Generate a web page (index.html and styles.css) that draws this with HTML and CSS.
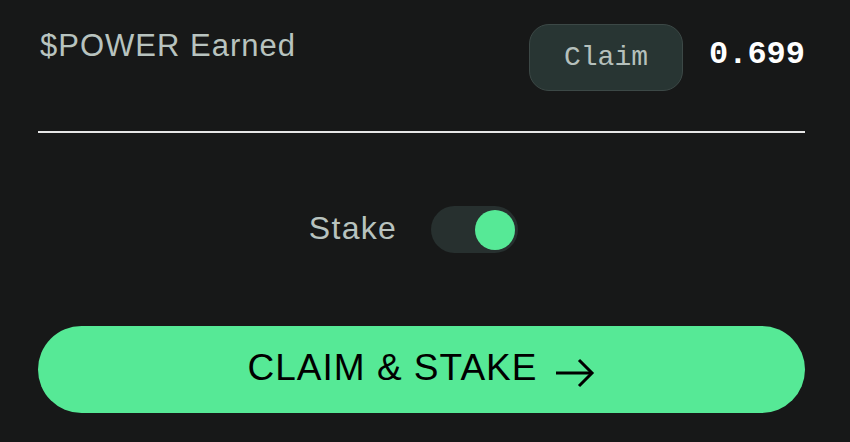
FILE: index.html
```html
<!DOCTYPE html>
<html>
<head>
<meta charset="utf-8">
<link rel="stylesheet" href="styles.css">
</head>
<body>
<div class="panel">
  <div class="header">
    <div class="title">$POWER Earned</div>
    <div class="right">
      <button class="claim">Claim</button>
      <div class="amount">0.699</div>
    </div>
  </div>
  <div class="divider"></div>
  <div class="stake-row">
    <span class="stake-label">Stake</span>
    <div class="toggle"><div class="knob"></div></div>
  </div>
  <button class="cta">
    <span>CLAIM &amp; STAKE</span>
    <svg class="arrow" width="40" height="30" viewBox="0 0 40 30" fill="none" stroke="#000" stroke-width="3" stroke-linecap="butt" stroke-linejoin="miter">
      <path d="M1 15 H37"/>
      <path d="M24 2 L37 15 L24 28"/>
    </svg>
  </button>
</div>
</body>
</html>
```
FILE: styles.css
```css
* { box-sizing: border-box; }
html, body {
  margin: 0;
  padding: 0;
  background: #171818;
  width: 850px;
  height: 442px;
  overflow: hidden;
}
.panel {
  padding: 24px 45px 0 38px;
  font-family: "Liberation Sans", Arial, sans-serif;
}
.header {
  display: flex;
  justify-content: space-between;
  align-items: flex-start;
  height: 107px;
}
.title {
  color: #b8c3bf;
  font-size: 31px;
  line-height: 36px;
  letter-spacing: 1px;
  margin-top: 4px;
  padding-left: 2px;
}
.right {
  display: flex;
  align-items: center;
  gap: 26px;
}
.claim {
  width: 154px;
  height: 67px;
  border-radius: 20px;
  background: #283533;
  border: 1.5px solid #3c4846;
  color: #b5c0bc;
  font-family: "Liberation Mono", "DejaVu Sans Mono", monospace;
  font-size: 28px;
  padding: 0;
}
.amount {
  color: #ffffff;
  font-family: "Liberation Mono", "DejaVu Sans Mono", monospace;
  font-weight: bold;
  font-size: 32px;
  line-height: 36px;
  margin-top: -6px;
}
.divider {
  height: 2px;
  background: #e6e6e6;
}
.stake-row {
  display: flex;
  justify-content: center;
  align-items: center;
  gap: 34px;
  margin-top: 73px;
  padding-right: 16px;
}
.stake-label {
  color: #b8c3bf;
  font-size: 32px;
  line-height: 36px;
  letter-spacing: 1.3px;
  margin-top: -3px;
}
.toggle {
  width: 87px;
  height: 47px;
  border-radius: 24px;
  background: #27302f;
  display: flex;
  align-items: center;
  justify-content: flex-end;
  padding-right: 3px;
}
.knob {
  width: 40px;
  height: 40px;
  border-radius: 50%;
  background: #56e996;
}
.cta {
  margin-top: 73px;
  width: 100%;
  height: 87px;
  border: none;
  border-radius: 44px;
  background: #56e996;
  color: #000;
  font-family: "Liberation Sans", Arial, sans-serif;
  font-size: 37px;
  letter-spacing: 1px;
  display: flex;
  align-items: center;
  justify-content: center;
  gap: 18px;
  padding: 0 0 0 0;
}
.cta span { margin-top: -4px; }
.arrow { display: block; margin-top: 6px; }
```
